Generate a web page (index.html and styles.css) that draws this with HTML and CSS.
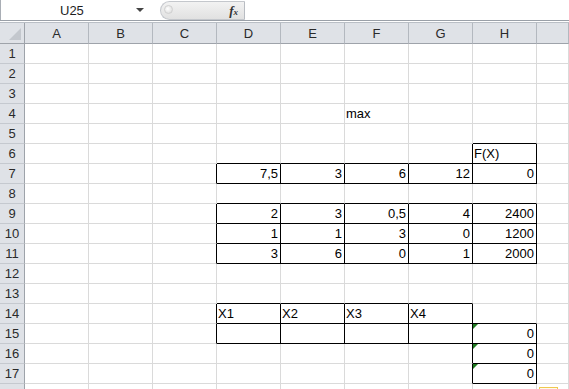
FILE: index.html
```html
<!DOCTYPE html>
<html lang="ru">
<head>
    <meta charset="UTF-8">
    <title>Книга1 - Excel</title>
    <link rel="stylesheet" href="styles.css">
</head>
<body>
    <div class="formula-bar">
        <div class="name-box">
            <span class="name-text">U25</span>
            <span class="name-arrow"></span>
        </div>
        <div class="fx-box">
            <span class="fx-knob"></span>
            <span class="fx">f<sub>x</sub></span>
        </div>
        <div class="formula-input"></div>
    </div>

    <div class="sheet">
        <!-- заголовки столбцов -->
        <div class="corner"><span class="corner-tri"></span></div>
        <div class="col-head">A</div>
        <div class="col-head">B</div>
        <div class="col-head">C</div>
        <div class="col-head">D</div>
        <div class="col-head">E</div>
        <div class="col-head">F</div>
        <div class="col-head">G</div>
        <div class="col-head">H</div>
        <div class="col-head"></div>

        <!-- 1 -->
        <div class="row-head">1</div>
        <div class="c"></div><div class="c"></div><div class="c"></div><div class="c"></div><div class="c"></div><div class="c"></div><div class="c"></div><div class="c"></div><div class="c"></div>
        <!-- 2 -->
        <div class="row-head">2</div>
        <div class="c"></div><div class="c"></div><div class="c"></div><div class="c"></div><div class="c"></div><div class="c"></div><div class="c"></div><div class="c"></div><div class="c"></div>
        <!-- 3 -->
        <div class="row-head">3</div>
        <div class="c"></div><div class="c"></div><div class="c"></div><div class="c"></div><div class="c"></div><div class="c"></div><div class="c"></div><div class="c"></div><div class="c"></div>
        <!-- 4 -->
        <div class="row-head">4</div>
        <div class="c"></div><div class="c"></div><div class="c"></div><div class="c"></div><div class="c"></div><div class="c">max</div><div class="c"></div><div class="c"></div><div class="c"></div>
        <!-- 5 -->
        <div class="row-head">5</div>
        <div class="c"></div><div class="c"></div><div class="c"></div><div class="c"></div><div class="c"></div><div class="c"></div><div class="c"></div><div class="c bb"></div><div class="c"></div>
        <!-- 6 -->
        <div class="row-head">6</div>
        <div class="c"></div><div class="c"></div><div class="c"></div><div class="c bb"></div><div class="c bb"></div><div class="c bb"></div><div class="c bb br"></div><div class="c bx">F(X)</div><div class="c"></div>
        <!-- 7 -->
        <div class="row-head">7</div>
        <div class="c"></div><div class="c"></div><div class="c br"></div><div class="c bx n">7,5</div><div class="c bx n">3</div><div class="c bx n">6</div><div class="c bx n">12</div><div class="c bx n">0</div><div class="c"></div>
        <!-- 8 -->
        <div class="row-head">8</div>
        <div class="c"></div><div class="c"></div><div class="c"></div><div class="c bb"></div><div class="c bb"></div><div class="c bb"></div><div class="c bb"></div><div class="c bb"></div><div class="c"></div>
        <!-- 9 -->
        <div class="row-head">9</div>
        <div class="c"></div><div class="c"></div><div class="c br"></div><div class="c bx n">2</div><div class="c bx n">3</div><div class="c bx n">0,5</div><div class="c bx n">4</div><div class="c bx n">2400</div><div class="c"></div>
        <!-- 10 -->
        <div class="row-head">10</div>
        <div class="c"></div><div class="c"></div><div class="c br"></div><div class="c bx n">1</div><div class="c bx n">1</div><div class="c bx n">3</div><div class="c bx n">0</div><div class="c bx n">1200</div><div class="c"></div>
        <!-- 11 -->
        <div class="row-head">11</div>
        <div class="c"></div><div class="c"></div><div class="c br"></div><div class="c bx n">3</div><div class="c bx n">6</div><div class="c bx n">0</div><div class="c bx n">1</div><div class="c bx n">2000</div><div class="c"></div>
        <!-- 12 -->
        <div class="row-head">12</div>
        <div class="c"></div><div class="c"></div><div class="c"></div><div class="c"></div><div class="c"></div><div class="c"></div><div class="c"></div><div class="c"></div><div class="c"></div>
        <!-- 13 -->
        <div class="row-head">13</div>
        <div class="c"></div><div class="c"></div><div class="c"></div><div class="c bb"></div><div class="c bb"></div><div class="c bb"></div><div class="c bb"></div><div class="c"></div><div class="c"></div>
        <!-- 14 -->
        <div class="row-head">14</div>
        <div class="c"></div><div class="c"></div><div class="c br"></div><div class="c bx">X1</div><div class="c bx">X2</div><div class="c bx">X3</div><div class="c bx">X4</div><div class="c bb"></div><div class="c"></div>
        <!-- 15 -->
        <div class="row-head">15</div>
        <div class="c"></div><div class="c"></div><div class="c br"></div><div class="c bx"></div><div class="c bx"></div><div class="c bx"></div><div class="c bx"></div><div class="c bx n err">0</div><div class="c"></div>
        <!-- 16 -->
        <div class="row-head">16</div>
        <div class="c"></div><div class="c"></div><div class="c"></div><div class="c"></div><div class="c"></div><div class="c"></div><div class="c br"></div><div class="c bx n err">0</div><div class="c"></div>
        <!-- 17 -->
        <div class="row-head">17</div>
        <div class="c"></div><div class="c"></div><div class="c"></div><div class="c"></div><div class="c"></div><div class="c"></div><div class="c br"></div><div class="c bx n err">0</div><div class="c"></div>
        <!-- 18 -->
        <div class="row-head"></div>
        <div class="c"></div><div class="c"></div><div class="c"></div><div class="c"></div><div class="c"></div><div class="c"></div><div class="c"></div><div class="c"></div><div class="c"><span class="paste-tag"></span></div>
    </div>
</body>
</html>
```

FILE: styles.css
```css
* {
    box-sizing: border-box;
    margin: 0;
    padding: 0;
}

body {
    width: 569px;
    height: 389px;
    overflow: hidden;
    background: #fff;
    font-family: "Liberation Sans", Arial, sans-serif;
    font-size: 13px;
    color: #000;
}

/* строка формул */
.formula-bar {
    display: flex;
    height: 23px;
    border-bottom: 1px solid #b9bec5;
    position: relative;
}

.formula-bar::after {
    content: '';
    position: absolute;
    left: 0;
    right: 0;
    top: 20px;
    height: 1px;
    background: #9aa0a8;
}

.name-box {
    width: 160px;
    height: 20px;
    border-left: 1px solid #a9aeb5;
    display: flex;
    align-items: center;
    padding-left: 59px;
}

.name-text {
    font-size: 13px;
    color: #1e1e1e;
}

.name-arrow {
    margin-left: 52px;
    width: 0;
    height: 0;
    border-left: 4px solid transparent;
    border-right: 4px solid transparent;
    border-top: 4px solid #444;
}

.fx-box {
    width: 85px;
    height: 19px;
    margin-top: 1px;
    background: linear-gradient(#f2f2f2, #e1e1e1);
    border: 1px solid #c4c7cc;
    border-right-color: #b8bcc2;
    border-radius: 10px 0 0 10px;
    display: flex;
    align-items: center;
    justify-content: space-between;
    padding: 0 6px 0 3px;
}

.fx-knob {
    width: 9px;
    height: 9px;
    border-radius: 50%;
    background: radial-gradient(circle at 40% 40%, #fff, #d6d6d6);
    border: 1px solid #d0d0d0;
    margin-top: -2px;
}

.fx {
    font-family: "Liberation Serif", "Times New Roman", serif;
    font-style: italic;
    font-weight: bold;
    font-size: 13px;
    color: #333;
}

.fx sub {
    font-size: 9px;
    vertical-align: baseline;
}

.formula-input {
    flex: 1;
    height: 20px;
    background: #fff;
}

/* лист */
.sheet {
    display: grid;
    grid-template-columns: 25px repeat(8, 64px) 1fr;
    grid-template-rows: 21px;
    grid-auto-rows: 20px;
}

.corner,
.col-head,
.row-head {
    background: #dfe2e7;
    color: #2a2a2a;
    font-size: 13px;
}

.corner {
    border-right: 1px solid #9ea3aa;
    border-bottom: 1px solid #9ea3aa;
    position: relative;
}

.corner-tri {
    position: absolute;
    right: 3px;
    bottom: 3px;
    width: 0;
    height: 0;
    border-left: 12px solid transparent;
    border-bottom: 12px solid #c3c7cd;
}

.col-head {
    display: flex;
    align-items: center;
    justify-content: center;
    border-right: 1px solid #b3b8bf;
    border-bottom: 1px solid #9ea3aa;
}

.row-head {
    display: flex;
    align-items: center;
    justify-content: center;
    border-right: 1px solid #9ea3aa;
    border-bottom: 1px solid #c5c9cf;
}

.c {
    border-right: 1px solid #dadada;
    border-bottom: 1px solid #dadada;
    padding: 0 2px 0 1px;
    display: flex;
    align-items: flex-end;
    line-height: 16px;
    padding-bottom: 1px;
    white-space: nowrap;
    position: relative;
}

.c.n {
    justify-content: flex-end;
}

/* границы ячеек */
.bx {
    border-right-color: #000;
    border-bottom-color: #000;
}

.bb {
    border-bottom-color: #000;
}

.br {
    border-right-color: #000;
}

/* зелёный уголок ошибки */
.err::before {
    content: '';
    position: absolute;
    left: 0;
    top: 0;
    width: 0;
    height: 0;
    border-top: 5px solid #1f7a1f;
    border-right: 5px solid transparent;
}

.paste-tag {
    position: absolute;
    left: 2px;
    top: 3px;
    width: 19px;
    height: 18px;
    border: 1px solid #f0c850;
    background: #fffbe8;
}
```
